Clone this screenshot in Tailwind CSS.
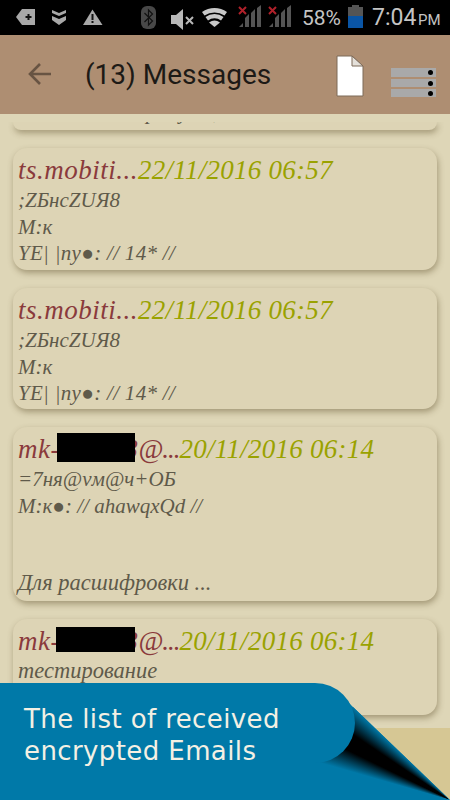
<!DOCTYPE html>
<html lang="ru">
<head>
<meta charset="UTF-8">
<meta name="viewport" content="width=device-width, initial-scale=1.0">
<title>Messages</title>
<script src="https://cdn.jsdelivr.net/npm/@tailwindcss/browser@4"></script>
</head>
<body class="w-[450px] h-[800px] overflow-hidden relative flex flex-col bg-[#ded6b7] font-['Liberation_Serif',serif]">

<!-- status bar -->
<div class="h-[35px] shrink-0 bg-black relative flex items-center text-[#c4c4c4] font-['Roboto',sans-serif]">
  <svg class="absolute left-0 top-0" width="300" height="35" viewBox="0 0 300 35">
    <path d="M22 9h13v16H22l-6-8z" fill="#a8a8a8"/>
    <path d="M25.500 17h6M28.500 14v6" stroke="#111" stroke-width="2"/>
    <path d="M52 10l7 3 7-3v3l-7 3-7-3zM52 16l7 3 7-3v4l-7 5-7-5z" fill="#a8a8a8"/>
    <path d="M92.500 9.500l10 15.500H83z" fill="#a8a8a8"/>
    <path d="M92.500 14v6M92.500 21v2" stroke="#111" stroke-width="2"/>
    <rect x="141" y="6" width="15" height="23" rx="6" fill="#484848"/>
    <path d="M144.500 13l8 8-4 4V10l4 4-8 8" fill="none" stroke="#111" stroke-width="1.200"/>
    <path d="M171 15h5l7-6v21l-7-6h-5z" fill="#b8b8b8"/>
    <path d="M186 17l7 7M193 17l-7 7" stroke="#b8b8b8" stroke-width="2"/>
    <path d="M202 12a22 22 0 0 1 25 0l-2.500 3.500a18 18 0 0 0-20 0z" fill="#c8c8c8"/>
    <path d="M205.500 17a15 15 0 0 1 18 0l-2.500 3.500a11 11 0 0 0-13 0z" fill="#c8c8c8"/>
    <path d="M209 22.500a9 9 0 0 1 11 0l-5.500 4.500z" fill="#c8c8c8"/>
    <path d="M239 27l4-4v4zM245 27v-9l4-4v13zM251 27V13l4-4v18zM257 27V8l4-3v22z" fill="#555"/>
    <path d="M239 7l7 7M246 7l-7 7" stroke="#b0202a" stroke-width="2"/>
    <path d="M269 27l4-4v4zM275 27v-9l4-4v13zM281 27V13l4-4v18zM287 27V8l4-3v22z" fill="#555"/>
    <path d="M269 7l7 7M276 7l-7 7" stroke="#b0202a" stroke-width="2"/>
  </svg>
  <span class="absolute left-[302px] top-[5px] text-[21px] leading-[26px]">58%</span>
  <div class="absolute left-[348px] top-[5px] w-[15px] h-[23px]">
    <div class="w-[7px] h-[2px] mx-auto bg-[#555]"></div>
    <div class="h-[21px] bg-[#555] flex flex-col justify-end"><div class="h-[12px] bg-[#0a55a5]"></div></div>
  </div>
  <span class="absolute left-[372px] top-[3px] text-[23px] leading-[30px]">7:04</span>
  <span class="absolute left-[418px] top-[11px] text-[15px] leading-[18px]">PM</span>
</div>

<!-- app bar -->
<div class="h-[79px] shrink-0 bg-[#ae8e72] flex items-center relative">
  <svg class="ml-[27px] mb-[2px]" width="25" height="24" viewBox="0 0 25 24" fill="none" stroke="#685443" stroke-width="2.600">
    <path d="M24 12H3M13 2L3 12l10 10"/>
  </svg>
  <span class="ml-[33px] text-[28px] text-[#1d1a16] font-['Roboto',sans-serif]">(13) Messages</span>
  <svg class="absolute left-[336px] top-[20px]" width="28" height="42" viewBox="0 0 28 42">
    <path d="M1 1h15l11 10v30H1z" fill="#fff" stroke="#7d6a58" stroke-width="1"/>
    <path d="M16 1v10h11z" fill="#e4e0da" stroke="#7d6a58" stroke-width="1"/>
  </svg>
  <div class="absolute left-[391px] top-[33px] w-[45px] flex flex-col gap-[2px]">
    <div class="h-[9px] bg-[#a9a9a9] flex items-center justify-end pr-[3px]"><div class="w-[5px] h-[5px] rounded-full bg-black"></div></div>
    <div class="h-[8px] bg-[#a9a9a9] flex items-center justify-end pr-[3px]"><div class="w-[5px] h-[5px] rounded-full bg-black"></div></div>
    <div class="h-[8px] bg-[#a9a9a9] flex items-center justify-end pr-[3px]"><div class="w-[5px] h-[5px] rounded-full bg-black"></div></div>
  </div>
</div>

<!-- list -->
<div class="flex-1 min-h-0 mt-[8px] overflow-hidden flex flex-col gap-[18px] px-[13px]">
  <div class="shrink-0 h-[8px] rounded-b-[14px] bg-[#ddd4b5] shadow-[1px_3px_6px_rgba(90,75,40,0.45)] relative">
    <span class="absolute left-[133px] top-[-22px] text-[21px] leading-[24px] italic text-[#5f5a4a]">р</span>
    <span class="absolute left-[166px] top-[-22px] text-[21px] leading-[24px] italic text-[#5f5a4a]">у</span>
    <span class="absolute left-[200px] top-[-22px] text-[21px] leading-[24px] italic text-[#5f5a4a]">,</span>
  </div>

  <div class="shrink-0 h-[122px] rounded-[14px] bg-[#ddd4b5] shadow-[1px_3px_6px_rgba(90,75,40,0.45)] px-[5px] pt-[5px] italic text-[21px] leading-[26.500px] text-[#5f5a4a]">
    <div class="text-[27px] leading-[34px] whitespace-nowrap"><span class="text-[#8a3a3c] tracking-[0.5px]">ts.mobiti...</span><span class="text-[#9aa200] tracking-[0.25px]">22/11/2016 06:57</span></div>
    <div>;ZБнсZUЯ8</div>
    <div>М:к</div>
    <div class="tracking-[0.3px]">YE| |ny●: // 14* //</div>
  </div>

  <div class="shrink-0 h-[121px] rounded-[14px] bg-[#ddd4b5] shadow-[1px_3px_6px_rgba(90,75,40,0.45)] px-[5px] pt-[5px] italic text-[21px] leading-[26.500px] text-[#5f5a4a]">
    <div class="text-[27px] leading-[34px] whitespace-nowrap"><span class="text-[#8a3a3c] tracking-[0.5px]">ts.mobiti...</span><span class="text-[#9aa200] tracking-[0.25px]">22/11/2016 06:57</span></div>
    <div>;ZБнсZUЯ8</div>
    <div>М:к</div>
    <div class="tracking-[0.3px]">YE| |ny●: // 14* //</div>
  </div>

  <div class="shrink-0 h-[174px] rounded-[14px] bg-[#ddd4b5] shadow-[1px_3px_6px_rgba(90,75,40,0.45)] px-[5px] pt-[5px] italic text-[21px] leading-[26.500px] text-[#5f5a4a]">
    <div class="text-[27px] leading-[34px] whitespace-nowrap flex w-[424px]"><span class="text-[#8a3a3c] tracking-[0.5px] w-[39px]">mk-</span><span class="w-[78px] h-[29px] mt-[1px] bg-black relative z-10 shrink-0"></span><span class="text-[#8a3a3c] ml-[-11px]">8</span><span class="text-[#8a3a3c] ml-[1px] tracking-[-1px]">@...</span><span class="text-[#9aa200] tracking-[0.25px]">20/11/2016 06:14</span></div>
    <div>=7ня@vм@ч+ОБ</div>
    <div>М:к●: // ahawqxQd //</div>
    <div class="mt-[51px] text-[22.500px]">Для расшифровки ...</div>
  </div>

  <div class="shrink-0 h-[96px] rounded-[14px] bg-[#ddd4b5] shadow-[1px_3px_6px_rgba(90,75,40,0.45)] px-[5px] pt-[5px] italic text-[21px] leading-[26.500px] text-[#5f5a4a]">
    <div class="text-[27px] leading-[34px] whitespace-nowrap flex w-[424px]"><span class="text-[#8a3a3c] tracking-[0.5px] w-[38px]">mk-</span><span class="w-[79px] h-[25px] mt-[3px] bg-black relative z-10 shrink-0"></span><span class="text-[#8a3a3c] ml-[-11px]">8</span><span class="text-[#8a3a3c] ml-[1px] tracking-[-1px]">@...</span><span class="text-[#9aa200] tracking-[0.25px]">20/11/2016 06:14</span></div>
    <div class="text-[22.500px]">тестирование</div>
  </div>
</div>

<div class="h-[72px] shrink-0 bg-[#d6c794]"></div>

<!-- promo banner over the page -->
<div class="absolute left-0 bottom-0 w-[450px] h-[117px]">
  <div class="absolute inset-0 bg-[#0079a8] [clip-path:polygon(0_0,313px_0,338px_9px,353px_24px,450px_117px,0_117px)]"></div>
  <div class="absolute inset-0 bg-[conic-gradient(from_280deg_at_100%_100%,#0079a8_6deg,#000_16deg,#000_24deg,#0079a8_34deg)] [clip-path:polygon(320px_80px,345px_30px,353px_24px,450px_117px)]"></div>
  <div class="absolute left-0 top-0 w-[355px] h-[80px] rounded-r-[40px] bg-[#0079a8] pl-[24px] pt-[20px] text-[26px] tracking-[0.4px] leading-[32px] text-[#f3f0e4] font-['DejaVu_Sans',sans-serif]">
    <div>The list of received</div>
    <div>encrypted Emails</div>
  </div>
</div>

</body>
</html>
